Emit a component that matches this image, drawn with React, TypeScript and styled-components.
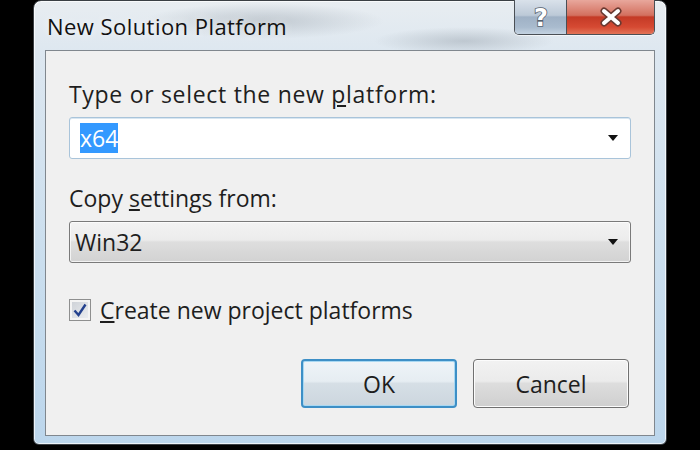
import styled, { createGlobalStyle } from "styled-components";

const GlobalStyle = createGlobalStyle`
  html, body {
    margin: 0;
    padding: 0;
    background: #000;
  }
  body {
    font-family: "Open Sans", "Noto Sans", sans-serif;
    color: #1e1e1e;
  }
`;

const Screen = styled.div`
  width: 700px;
  height: 450px;
  background: #000;
  overflow: hidden;
`;

const Window = styled.div`
  box-sizing: border-box;
  width: 634px;
  height: 445px;
  margin-left: 33px;
  display: flex;
  flex-direction: column;
  padding: 0 11px 8px 11px;
  border: 1px solid #3a3f44;
  border-radius: 8px 8px 6px 6px;
  background:
    radial-gradient(ellipse 120px 18px at 230px 20px, rgba(150, 160, 170, 0.45), transparent),
    radial-gradient(ellipse 90px 14px at 430px 40px, rgba(140, 150, 160, 0.4), transparent),
    linear-gradient(to bottom, #e8edf1 0%, #dde7f0 12%, #cadeee 60%, #bcd6ec 100%);
  box-shadow: inset 0 0 0 1px rgba(255, 255, 255, 0.7);
`;

const TitleBar = styled.div`
  height: 49px;
  display: flex;
  justify-content: space-between;
  align-items: flex-start;
`;

const Title = styled.div`
  padding: 10px 0 0 2px;
  font-size: 22px;
  letter-spacing: 0.45px;
  line-height: 30px;
  color: #111;
  text-shadow: 0 0 8px rgba(255, 255, 255, 0.9);
`;

const CaptionButtons = styled.div`
  display: flex;
  height: 34px;
  margin-top: -1px;
  border: 1px solid #4a4f55;
  border-top: none;
  border-radius: 0 0 5px 5px;
  overflow: hidden;
  box-shadow: 0 1px 0 rgba(255, 255, 255, 0.6);
`;

const CaptionButton = styled.div<{ $close?: boolean }>`
  width: ${({ $close }) => ($close ? "87px" : "51px")};
  display: flex;
  align-items: center;
  justify-content: center;
  background: ${({ $close }) =>
    $close
      ? "linear-gradient(to bottom, #e8a79c 0%, #d3705f 45%, #c43a26 50%, #d64a33 80%, #e27457 100%)"
      : "linear-gradient(to bottom, #d9e1ea 0%, #bcc9d7 45%, #9fb1c5 50%, #a9bbce 80%, #c4d3e1 100%)"};
  border-left: ${({ $close }) => ($close ? "1px solid #4a4f55" : "none")};
`;

const ClientArea = styled.div`
  flex: 1;
  display: flex;
  flex-direction: column;
  padding: 28px 23px 0 23px;
  border: 1px solid #80878e;
  background: #f0f0f0;
  font-size: 23px;
`;

const FieldLabel = styled.div<{ $top?: number; $spacing?: number }>`
  margin-top: ${({ $top }) => $top ?? 0}px;
  letter-spacing: ${({ $spacing }) => $spacing ?? 0}px;
  line-height: 30px;
`;

const Combo = styled.div<{ $editable?: boolean }>`
  box-sizing: border-box;
  height: 42px;
  margin-top: 8px;
  display: flex;
  align-items: center;
  justify-content: space-between;
  padding: 0 12px 0 ${({ $editable }) => ($editable ? "10px" : "5px")};
  border: 1px solid ${({ $editable }) => ($editable ? "#a9c4da" : "#7a7a7a")};
  border-radius: 3px;
  background: ${({ $editable }) =>
    $editable
      ? "#fff"
      : "linear-gradient(to bottom, #f3f3f3 0%, #ececec 45%, #dedede 50%, #d2d2d2 100%)"};
  box-shadow: ${({ $editable }) =>
    $editable ? "inset 0 1px 0 #d8e6f1" : "inset 0 0 0 1px rgba(255,255,255,0.7)"};
`;

const Selected = styled.span`
  background: #3399ff;
  color: #fff;
  line-height: 30px;
`;

const Arrow = styled.span`
  width: 0;
  height: 0;
  border-left: 5px solid transparent;
  border-right: 5px solid transparent;
  border-top: 6px solid #111;
`;

const CheckRow = styled.label`
  margin-top: 32px;
  display: flex;
  align-items: center;
  gap: 9px;
  line-height: 30px;
`;

const CheckBox = styled.span`
  box-sizing: border-box;
  width: 22px;
  height: 22px;
  display: flex;
  align-items: center;
  justify-content: center;
  border: 1px solid #8e8f8f;
  background: linear-gradient(135deg, #cbcfd5 0%, #eef0f3 100%);
  box-shadow: inset 0 0 0 2px #f4f4f4;
`;

const ButtonRow = styled.div`
  margin-top: 34px;
  padding-right: 2px;
  display: flex;
  justify-content: flex-end;
  gap: 16px;
`;

const DialogButton = styled.div<{ $default?: boolean }>`
  box-sizing: border-box;
  width: 156px;
  height: 49px;
  display: flex;
  align-items: center;
  justify-content: center;
  border: ${({ $default }) => ($default ? "2px solid #3d8fc6" : "1px solid #707070")};
  border-radius: 4px;
  background: ${({ $default }) =>
    $default
      ? "linear-gradient(to bottom, #eef4f8 0%, #e6edf2 45%, #d6dfe6 50%, #ccd6de 100%)"
      : "linear-gradient(to bottom, #f2f2f2 0%, #ebebeb 45%, #dddddd 50%, #cfcfcf 100%)"};
  box-shadow: inset 0 0 0 1px ${({ $default }) => ($default ? "#a8d8f2" : "#fcfcfc")};
`;

function HelpGlyph() {
  return (
    <svg width="24" height="28" viewBox="0 0 24 28">
      <text
        x="12"
        y="23"
        textAnchor="middle"
        fontFamily="DejaVu Sans, sans-serif"
        fontWeight="bold"
        fontSize="24"
        fill="#ffffff"
        stroke="#56616e"
        strokeWidth="1.6"
        paintOrder="stroke"
      >
        ?
      </text>
    </svg>
  );
}

function CloseGlyph() {
  return (
    <svg width="26" height="20" viewBox="0 0 26 20">
      <path d="M6 4 L20 16 M20 4 L6 16" stroke="#6a3a32" strokeWidth="7" strokeLinecap="round" />
      <path d="M6 4 L20 16 M20 4 L6 16" stroke="#fff" strokeWidth="4" strokeLinecap="round" />
    </svg>
  );
}

function CheckMark() {
  return (
    <svg width="16" height="16" viewBox="0 0 16 16">
      <path d="M2.5 8.5 L6.5 13 L13.5 2.5" fill="none" stroke="#23418e" strokeWidth="2.4" />
    </svg>
  );
}

function App() {
  return (
    <Screen>
      <GlobalStyle />
      <Window>
        <TitleBar>
          <Title>New Solution Platform</Title>
          <CaptionButtons>
            <CaptionButton>
              <HelpGlyph />
            </CaptionButton>
            <CaptionButton $close>
              <CloseGlyph />
            </CaptionButton>
          </CaptionButtons>
        </TitleBar>

        <ClientArea>
          <FieldLabel $spacing={0.7}>
            Type or select the new <u>p</u>latform:
          </FieldLabel>
          <Combo $editable>
            <Selected>x64</Selected>
            <Arrow />
          </Combo>

          <FieldLabel $top={24}>
            Copy <u>s</u>ettings from:
          </FieldLabel>
          <Combo>
            <span>Win32</span>
            <Arrow />
          </Combo>

          <CheckRow>
            <CheckBox>
              <CheckMark />
            </CheckBox>
            <span>
              <u>C</u>reate new project platforms
            </span>
          </CheckRow>

          <ButtonRow>
            <DialogButton $default>OK</DialogButton>
            <DialogButton>Cancel</DialogButton>
          </ButtonRow>
        </ClientArea>
      </Window>
    </Screen>
  );
}

export default App;
